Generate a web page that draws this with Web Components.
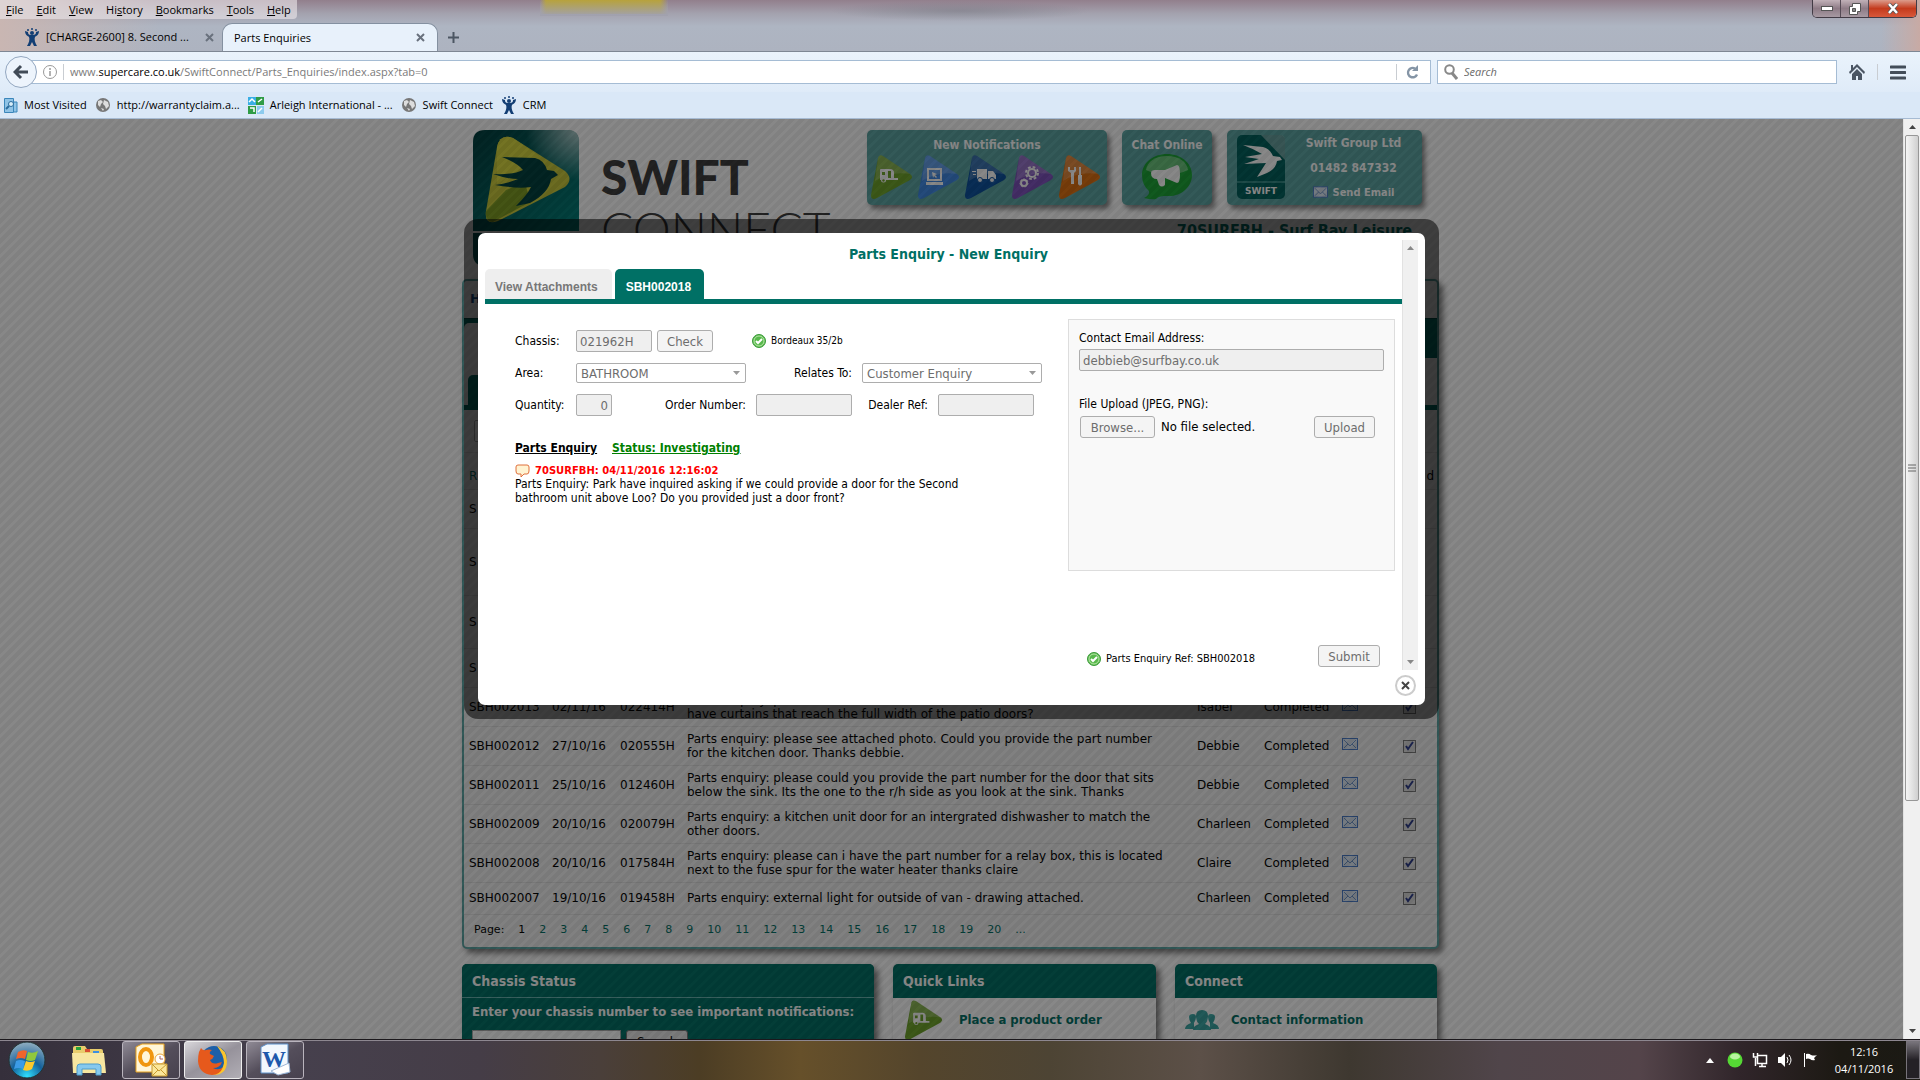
<!DOCTYPE html>
<html lang="en">
<head>
<meta charset="utf-8">
<title>Parts Enquiries</title>
<style>
	html, body { margin: 0; height: 100%; }
	body {
		display: flex;
		flex-direction: column;
		overflow: hidden;
		font-family: "DejaVu Sans Condensed", "DejaVu Sans", sans-serif;
		font-size: 12px;
		color: #000;
	}
</style>
</head>
<body>
<browser-chrome></browser-chrome>
<page-view></page-view>
<task-bar></task-bar>

<script>
class BaseElement extends HTMLElement {
	constructor() {
		super();
		this.attachShadow({ mode: "open" });
	}
	connectedCallback() {
		const template = document.createElement("template");
		template.innerHTML = `<style>*{box-sizing:border-box}${this.getStyles()}</style>${this.getTemplate()}`;
		this.shadowRoot.replaceChildren(template.content.cloneNode(true));
	}
}

const globe = `<svg width="16" height="16" viewBox="0 0 16 16"><circle cx="8" cy="8" r="7" fill="#777"/><path d="M3 4l3-1 2 2-2 2-1 3-2-2zM9 3l4 2 1 4-3 3-1-3-2-2zM6 11l3 1-1 2z" fill="#ddd"/></svg>`;
const jira = `<svg width="16" height="18" viewBox="0 0 16 18" fill="#123e74"><circle cx="8" cy="5" r="2"/><circle cx="4" cy="2" r="1"/><circle cx="12" cy="2" r="1"/><circle cx="8" cy="1" r="1"/><path d="M1 3c0 4 3 5 4 6 1 2 0 6-2 9h3l2-4 2 4h3c-2-3-3-7-2-9 1-1 4-2 4-6l-3 1c0 3-2 3-4 3S4 7 4 4z"/></svg>`;
const envelope = `<svg width="16" height="12" viewBox="0 0 16 12"><rect x=".5" y=".5" width="15" height="11" fill="#dbe5f2" stroke="#4a7cc8"/><path d="M2 2l6 6 6-6M2 10l4-4M14 10l-4-4" fill="none" stroke="#7095c8"/></svg>`;
const tick = `<svg width="14" height="14" viewBox="0 0 14 14"><circle cx="7" cy="7" r="6.5" fill="#58b94c" stroke="#3b9a3a"/><circle cx="7" cy="7" r="5" fill="none" stroke="#b9e6a9"/><path d="M4 7l2 2 4-4" fill="none" stroke="#fff" stroke-width="2"/></svg>`;

class BrowserChrome extends BaseElement {
	getStyles() {
		return `
			:host { display: block; flex: none; font-family: "Open Sans", "Noto Sans", sans-serif; font-size: 11px; line-height: 16px; }
			.strip {
				height: 52px; position: relative; border-bottom: 1px solid #7e8794;
				background:
					radial-gradient(ellipse 130px 10px at 960px 11px, #6b6f7866, transparent),
					linear-gradient(#0000, #a1a1ad) 540px 0 / 128px 16px no-repeat,
					linear-gradient(90deg, transparent 540px, #b7a23c 546px 660px, transparent 668px) 0 0 / 100% 14px no-repeat,
					linear-gradient(90deg, #c9b6b2 0, transparent 160px, transparent 98%, #c8aaa4),
					linear-gradient(#927f8c, #a4a3af 14px, #aeb5c2 26px, #adb3c0);
			}
			nav { display: inline-flex; gap: 13px; height: 19px; padding: 0 6px; line-height: 20px; background: #ece8eb99; border-radius: 0 0 4px 0; }
			nav a { color: #000; text-decoration: none; }
			nav u { text-decoration-thickness: 1px; }
			.tabs { display: flex; height: 28px; margin-top: 4px; align-items: center; }
			.tab { display: flex; align-items: center; gap: 6px; width: 222px; padding: 0 8px 0 24px; }
			.tab.on { width: 216px; height: 28px; padding: 0 12px 0 11px; background: #e8f1fb; border: 1px solid #8490a0; border-bottom: 0; border-radius: 10px 10px 0 0; }
			.tab span { flex: 1; white-space: nowrap; }
			.new { margin-left: 10px; }
			button { border: 0; padding: 0; background: none; display: flex; }
			.win { position: absolute; right: 3px; top: 0; display: flex; height: 18px; border: 1px solid #423b45; border-top: 0; border-radius: 0 0 5px 5px; overflow: hidden; }
			.win button { width: 28px; height: 17px; align-items: center; justify-content: center; background: linear-gradient(#c1b1b8, #8e7b86 50%, #a799a2); border-right: 1px solid #554a55; }
			.win button:last-child { width: 47px; border: 0; background: linear-gradient(#dc9c8c, #c43b1d 50%, #d8583a); }
			.bar { display: flex; align-items: center; height: 40px; padding: 0 14px 0 5px; background: linear-gradient(#eaf3fc, #dfebf8); }
			.back { width: 32px; height: 32px; flex: none; border-radius: 50%; border: 1px solid #93a7c0; background: #edf4fc; align-items: center; justify-content: center; z-index: 1; }
			.box { display: flex; align-items: center; gap: 6px; height: 24px; background: #fff; border: 1px solid #a5bcd4; }
			.url { flex: 1; margin-left: -6px; padding: 0 10px 0 11px; color: #7a7a7a; }
			.url p { flex: 1; margin: 0; }
			.url b { font-weight: 400; color: #000; }
			.sep { width: 1px; height: 16px; background: #c9cdd2; }
			.search { width: 400px; margin-left: 6px; padding: 0 6px; }
			input { flex: 1; border: 0; padding: 0; background: none; font: inherit; }
			input::placeholder { color: #6a6a6a; font-style: italic; opacity: 1; }
			.icons { display: flex; align-items: center; gap: 12px; margin-left: 12px; }
			.marks { display: flex; align-items: center; gap: 8px; height: 27px; padding: 0 4px; background: #dae8f7; border-bottom: 1px solid #a6bbd3; }
			.marks a { display: flex; align-items: center; gap: 6px; color: #000; text-decoration: none; }
		`;
	}
	getTemplate() {
		const cross = `<svg width="9" height="9" viewBox="0 0 9 9"><path d="M1 1l7 7M8 1l-7 7" stroke="#69717d" stroke-width="2"/></svg>`;
		return `
			<div class="strip">
				<nav><a href="#"><u>F</u>ile</a><a href="#"><u>E</u>dit</a><a href="#"><u>V</u>iew</a><a href="#">Hi<u>s</u>tory</a><a href="#"><u>B</u>ookmarks</a><a href="#"><u>T</u>ools</a><a href="#"><u>H</u>elp</a></nav>
				<div class="tabs">
					<div class="tab">${jira}<span>[CHARGE-2600] 8. Second ...</span><button aria-label="Close tab">${cross}</button></div>
					<div class="tab on"><span>Parts Enquiries</span><button aria-label="Close tab">${cross}</button></div>
					<button class="new" aria-label="New tab"><svg width="11" height="11"><path d="M5.500 0v11M0 5.500h11" stroke="#4c5663" stroke-width="2"/></svg></button>
				</div>
				<div class="win">
					<button aria-label="Minimise"><svg width="12" height="5"><rect x=".5" y=".5" width="11" height="4" fill="#fff" stroke="#555"/></svg></button>
					<button aria-label="Restore"><svg width="12" height="12"><path d="M3.500.5h8v8h-3v3h-8v-8h3z" fill="#fff" stroke="#555"/><path d="M3.500 5.500h3v3h-3z" fill="#888" stroke="#555"/></svg></button>
					<button aria-label="Close"><svg width="12" height="11"><path d="M2 1l8 9M10 1L2 10" stroke="#555" stroke-width="4"/><path d="M2 1l8 9M10 1L2 10" stroke="#fff" stroke-width="2.500"/></svg></button>
				</div>
			</div>
			<div class="bar">
				<button class="back" aria-label="Back"><svg width="16" height="16" viewBox="0 0 16 16"><path d="M8 2L2 8l6 6M3 8h12" fill="none" stroke="#414b57" stroke-width="3"/></svg></button>
				<div class="box url">
					<svg width="14" height="14" viewBox="0 0 14 14"><circle cx="7" cy="7" r="6.500" fill="none" stroke="#999"/><path d="M7 3v2M7 6v5" stroke="#999" stroke-width="1.500"/></svg>
					<i class="sep"></i>
					<p>www.<b>supercare.co.uk</b>/SwiftConnect/Parts_Enquiries/index.aspx?tab=0</p>
					<i class="sep"></i>
					<svg width="17" height="14" viewBox="-3 0 17 14"><path d="M11 9.500A4.700 4.700 0 1 1 9 3.500" fill="none" stroke="#8595a6" stroke-width="2.400"/><path d="M12 0v6H6z" fill="#8595a6"/></svg>
				</div>
				<div class="box search">
					<svg width="14" height="16" viewBox="0 0 14 16"><circle cx="5.500" cy="5.500" r="4.300" fill="none" stroke="#888" stroke-width="2"/><path d="M8 9l5 6" stroke="#888" stroke-width="3"/></svg>
					<input type="text" aria-label="Search" placeholder="Search">
				</div>
				<div class="icons">
					<svg width="16" height="16" viewBox="0 0 16 16"><path d="M8 0l8 8-1 2-7-7-7 7-1-2 2-2V1h2v3zM8 5l5 5v6h-4v-4H7v4H3v-6z" fill="#4a5563"/></svg>
					<i class="sep"></i>
					<svg width="16" height="15"><path d="M1 2h14M1 7.500h14M1 13h14" stroke="#434d59" stroke-width="3" stroke-linecap="round"/></svg>
				</div>
			</div>
			<div class="marks">
				<a href="#"><svg width="14" height="17" viewBox="0 0 14 17"><path d="M.5 1.500h9v14h-9zM10 5h3v10h-3" fill="#8fc3e6" stroke="#3b86ba"/><circle cx="7" cy="7" r="2.500" fill="#d8eefa" stroke="#2b6c9d"/><path d="M5 9l-3 3" stroke="#2b6c9d" stroke-width="2"/></svg>Most Visited</a>
				<a href="#">${globe}http://warrantyclaim.a...</a>
				<a href="#"><svg width="16" height="17" viewBox="0 0 16 17"><path d="M0 0h8v8H0z" fill="#39aee4"/><path d="M8 0h8v8H8zM0 9h8v8H0z" fill="#2f9c46"/><path d="M9 9h7v8H9z" fill="#8ccbee"/><path d="M1 5l3-3 3 3M10 5l4-3M2 11h4v4M10 15l4-4" stroke="#fff" fill="none" stroke-width="1.500"/></svg>Arleigh International - ...</a>
				<a href="#">${globe}Swift Connect</a>
				<a href="#">${jira}CRM</a>
			</div>
		`;
	}
}
customElements.define("browser-chrome", BrowserChrome);

// rounded play triangle with a white glyph in it
class PlayIcon extends BaseElement {
	getStyles() {
		return `:host { display: block; width: 42px; height: 44px; } svg { display: block; width: 100%; height: 100%; }`;
	}
	getTemplate() {
		const glyphs = {
			van: `<path d="M9 15q0-1 1-1h9q4 0 4 4v5h4v2H15a2.500 2.500 0 0 1-5 0H9z" fill="#fff"/><path d="M11 17h3v3h-3zM17 16h3v7h-3z" fill="#6fa52a"/><circle cx="12.500" cy="25.500" r="1.200" fill="#6fa52a"/>`,
			laptop: `<path d="M10 14h13v11H10z" fill="none" stroke="#fff" stroke-width="2"/><path d="M8 27h17v3H8zM14 17l5 2-2 1 2 2-1 1-2-2-1 2z" fill="#fff"/>`,
			truck: `<path d="M12 14h10v10H12zM23 16h5l3 4v4h-8zM7 16h4v1H7zM8 19h3v1H8z" fill="#fff"/><circle cx="15" cy="25" r="2.500" fill="#fff" stroke="#0b519f"/><circle cx="27" cy="25" r="2.500" fill="#fff" stroke="#0b519f"/>`,
			gears: `<circle cx="20" cy="18" r="4" fill="none" stroke="#fff" stroke-width="2"/><circle cx="20" cy="18" r="6" fill="none" stroke="#fff" stroke-width="2" stroke-dasharray="2.700 2"/><circle cx="12" cy="28" r="3" fill="none" stroke="#fff" stroke-width="2"/><circle cx="12" cy="28" r="4" fill="none" stroke="#fff" stroke-dasharray="2 1.500"/>`,
			tools: `<path d="M9 12v4l3 2v11h3V18l2-2v-4h-2v3h-4v-3zM20 12h2v8h1v9q-2 3-4 0v-9h1z" fill="#fff"/>`
		};
		const fill = this.getAttribute("fill");
		return `<svg viewBox="0 0 42 44">
			<path d="M7 3q1-4 5-2l27 18q4 3 0 6L6 43q-6 3-6-3z" fill="${fill}"/>
			<path d="M7 3q1-4 5-2l27 18Q20 16 4 26z" fill="#fff" opacity=".2"/>
			${glyphs[this.getAttribute("glyph")]}
		</svg>`;
	}
}
customElements.define("play-icon", PlayIcon);

class HeaderCard extends BaseElement {
	getStyles() {
		return `
			:host { display: block; height: 75px; background: #5ca6a4; border-radius: 5px; box-shadow: 3px 4px 5px #0007; color: #fff; font-weight: 700; }
			h3 { margin: 0; padding-top: 7px; font-size: 12px; line-height: 16px; text-align: center; }
			h3:empty { display: none; }
		`;
	}
	getTemplate() {
		return `<h3>${this.getAttribute("heading") || ""}</h3><slot></slot>`;
	}
}
customElements.define("header-card", HeaderCard);

class SiteHeader extends BaseElement {
	getStyles() {
		return `
			:host { display: block; height: 160px; }
			header { display: flex; align-items: flex-start; padding: 11px 19px 0 11px; }
			.logo { flex: none; }
			.brand { flex: 1; padding: 21px 0 0 22px; color: #3c3c3c; font: 900 48px/52px Lato, sans-serif; }
			.brand span { display: block; font-weight: 300; }
			.cards { display: grid; grid-template-columns: 240px 90px 195px; gap: 15px; }
			.row { display: flex; padding: 2px 4px; gap: 5px; }
			.chat { display: block; margin: 1px auto; }
			.contact { display: grid; grid-template-columns: 58px 1fr; }
			.contact svg { margin: 5px 0 0 10px; }
			.contact div { display: flex; flex-direction: column; gap: 9px; padding: 5px 0 0; text-align: center; font-size: 12px; line-height: 16px; }
			.contact a { color: #fff; font-size: 11px; text-decoration: none; }
			.contact a svg { margin: 0 5px 0 0; vertical-align: -2px; width: 15px; }
			h2 { grid-column: 1 / -1; margin: 0 10px 0 0; text-align: right; color: #007065; font-size: 16px; line-height: 22px; }
		`;
	}
	getTemplate() {
		return `
			<header>
				<svg class="logo" width="106" height="136" viewBox="0 0 106 136">
					<defs><linearGradient id="g" x2="1" y2="1"><stop offset="0" stop-color="#003c3c"/><stop offset="1" stop-color="#00807a"/></linearGradient>
					<radialGradient id="s" cx="1" cy="0" r=".5"><stop stop-color="#fff" stop-opacity=".7"/><stop offset="1" stop-color="#fff" stop-opacity="0"/></radialGradient></defs>
					<path d="M0 12Q0 0 12 0h82q12 0 12 12v89H0z" fill="url(#g)"/><path d="M0 12Q0 0 12 0h82q12 0 12 12v89H0z" fill="url(#s)"/>
					<path d="M0 103h106v21q0 12-12 12H12q-12 0-12-12z" fill="#005050"/>
					<path d="M24 17q3-14 16-9l52 33q9 8 0 16L25 91q-14 5-12-10z" fill="#c8c83a"/>
					<path d="M24 17q3-14 16-9l26 18-42 28z" fill="#d8d83e"/><path d="M33 60l19-8 5 20-37 20q-8 0-7-11z" fill="#7e9c22"/>
					<path d="M29 27l33 1q9 2 12 12l7 1 4 4-7 4q-2 14-21 24l-14 3q12-12 15-19-14 2-36-2 14-2 23-6-11 0-25-5 20 1 30-4-6-7-21-13z" fill="#00403e"/>
				</svg>
				<div class="brand">SWIFT<span>CONNECT</span></div>
				<div class="cards">
					<header-card heading="New Notifications"><div class="row">
						<play-icon glyph="van" fill="#6fa52a"></play-icon><play-icon glyph="laptop" fill="#3f8ae6"></play-icon><play-icon glyph="truck" fill="#0b519f"></play-icon><play-icon glyph="gears" fill="#7d52bd"></play-icon><play-icon glyph="tools" fill="#df7010"></play-icon>
					</div></header-card>
					<header-card heading="Chat Online"><svg class="chat" width="50" height="46" viewBox="0 0 50 46"><path d="M25 0c14 0 25 9 25 21S39 43 25 42c-5 0-8 0-11 3q-4 1-12-1 6-3 5-7-7-6-7-16C0 9 11 0 25 0z" fill="#1ba636"/><path d="M25 2c12 0 20 6 21 14q-21 10-42 0C5 8 13 2 25 2z" fill="#fff" opacity=".35"/><path d="M9 19q0-3 4-3h10l12-5q3 0 3 9t-3 9l-12-5v7q-3 3-6 0l-2-6q-6 0-6-6z" fill="#fff"/></svg></header-card>
					<header-card><div class="contact">
						<svg width="48" height="64" viewBox="0 0 48 64"><rect width="48" height="64" rx="5" fill="#00605c"/><path d="M0 47h48" stroke="#69b3b0"/><path d="M24 0h19q5 0 5 5v20z" fill="#fff" opacity=".4"/><path d="M6 10l20 2q7 2 10 9l7 1 2 3-5 1q-1 8-10 12L20 42l9-14-22 1 15-5-14-2 17-3Q17 14 6 10z" fill="#fff"/><text x="24" y="59" text-anchor="middle" fill="#fff" font-family="DejaVu Sans" font-weight="700" font-size="9">SWIFT</text></svg>
						<div><span>Swift Group Ltd</span><span>01482 847332</span><a href="#">${envelope}Send Email</a></div>
					</div></header-card>
					<h2>70SURFBH - Surf Bay Leisure</h2>
				</div>
			</header>
		`;
	}
}
customElements.define("site-header", SiteHeader);

class EnquiryList extends BaseElement {
	getStyles() {
		return `
			:host { display: block; background: #f2f2f2; border: 2px solid #5ca6a4; border-radius: 5px; box-shadow: 4px 4px 6px #0008; font: 12px/14px "DejaVu Sans", sans-serif; }
			.nav { height: 37px; padding: 11px 6px; color: #124a86; font-weight: 700; font-size: 13px; }
			.sub { height: 40px; background: #007065; border-top: 1px solid #005048; }
			.sub i { display: block; width: 300px; height: 35px; margin-top: 4px; background: #f2f2f2; border-radius: 5px 5px 0 0; }
			.tabs { height: 52px; padding-top: 17px; border-bottom: 5px solid #007065; }
			.tabs i { display: block; width: 100px; height: 30px; margin-left: 4px; background: #007065; border-radius: 5px 5px 0 0; }
			.filter { height: 42px; padding: 10px; }
			.filter input { width: 120px; height: 22px; border: 1px solid #aaa; border-radius: 2px; }
			table { width: 100%; border-collapse: collapse; table-layout: fixed; }
			td, th { padding: 0 0 0 5px; height: 39px; border-top: 1px solid #e0e0e0; text-align: left; font-weight: 400; white-space: nowrap; }
			th { height: 37px; padding-top: 10px; color: #007065; }
			th:last-child { text-align: right; padding-right: 3px; color: #000; }
			td.gap { height: 67px; }
			td.mid { height: 53px; }
			td.low { height: 31px; }
			td svg { display: block; margin-top: -4px; }
			td input { display: block; appearance: none; width: 13px; height: 13px; margin: 0; border: 1px solid #777; background: #ddd; }
			td svg.check { margin: -12px 0 2px 2px; }
			.pager { display: flex; gap: 14px; height: 33px; padding: 8px 10px; border-top: 1px solid #e0e0e0; font-size: 11px; }
			.pager a { color: #007065; text-decoration: none; }
		`;
	}
	getTemplate() {
		const rows = [
			["SBH002013", "02/11/16", "022414H", "Parts enquiry: please<br>have curtains that reach the full width of the patio doors?", "Isabel"],
			["SBH002012", "27/10/16", "020555H", "Parts enquiry: please see attached photo. Could you provide the part number<br>for the kitchen door. Thanks debbie.", "Debbie"],
			["SBH002011", "25/10/16", "012460H", "Parts enquiry: please could you provide the part number for the door that sits<br>below the sink. Its the one to the r/h side as you look at the sink. Thanks", "Debbie"],
			["SBH002009", "20/10/16", "020079H", "Parts enquiry: a kitchen unit door for an intergrated dishwasher to match the<br>other doors.", "Charleen"],
			["SBH002008", "20/10/16", "017584H", "Parts enquiry: please can i have the part number for a relay box, this is located<br>next to the fuse spur for the water heater thanks claire", "Claire"],
			["SBH002007", "19/10/16", "019458H", "Parts enquiry: external light for outside of van - drawing attached.", "Charleen"]
		];
		const body = rows.map((row, i) => {
			const cls = i === rows.length - 1 ? "low" : "";
			return `<tr>${row.map(cell => `<td class="${cls}">${cell}</td>`).join("")}
				<td class="${cls}">Completed</td><td class="${cls}">${envelope}</td>
				<td class="${cls}"><input type="checkbox" checked aria-label="${row[0]} closed"><svg class="check" width="9" height="10"><path d="M1 5l2 3 5-7" fill="none" stroke="#2c3b8a" stroke-width="2"/></svg></td></tr>`;
		}).join("");
		const pages = Array.from({ length: 19 }, (_, i) => `<a href="#">${i + 2}</a>`).join("");
		return `
			<div class="nav">H</div>
			<div class="sub"><i></i></div>
			<div class="tabs"><i></i></div>
			<div class="filter"><input type="text" aria-label="Filter"></div>
			<table>
				<colgroup><col style="width:83px"><col style="width:68px"><col style="width:67px"><col style="width:510px"><col style="width:67px"><col style="width:78px"><col style="width:61px"><col></colgroup>
				<tr><th colspan="7">R</th><th>d</th></tr>
				<tr><td colspan="8">S</td></tr>
				<tr><td colspan="8" class="gap">S</td></tr>
				<tr><td colspan="8" class="mid">S</td></tr>
				<tr><td colspan="8">S</td></tr>
				${body}
			</table>
			<div class="pager"><span>Page:</span><span>1</span>${pages}<a href="#">...</a></div>
		`;
	}
}
customElements.define("enquiry-list", EnquiryList);

class InfoCard extends BaseElement {
	getStyles() {
		return `
			:host { display: block; height: 200px; background: #fff; border-radius: 5px 5px 0 0; box-shadow: 4px 4px 6px #0008; color: #007065; font-weight: 700; font-size: 13px; }
			:host([solid]) { background: #007065; color: #fff; }
			h3 { margin: 0; height: 34px; padding: 0 10px; font-size: 14px; line-height: 35px; color: #fff; background: #007065; border-radius: 5px 5px 0 0; border-bottom: 1px solid #007065; }
			:host([solid]) h3 { border-bottom-color: #69b3b0; }
			div { padding: 0 10px; }
		`;
	}
	getTemplate() {
		return `<h3>${this.getAttribute("heading")}</h3><div><slot></slot></div>`;
	}
}
customElements.define("info-card", InfoCard);

class ScrollBar extends BaseElement {
	getStyles() {
		return `
			:host { display: flex; flex-direction: column; width: 17px; background: #f0f0f0; border-left: 1px solid #e2e2e2; }
			svg { flex: none; display: block; margin: 6px auto; }
			.track { flex: 1; display: flex; flex-direction: column; }
			.thumb { height: 75%; margin: 0 1px; display: flex; align-items: center; justify-content: center; border: 1px solid #979797; border-radius: 2px; background: linear-gradient(90deg, #f5f5f5, #e3e3e3 50%, #cfcfcf); }
			:host([disabled]) .thumb { display: none; }
			:host([disabled]) svg { opacity: .6; }
		`;
	}
	getTemplate() {
		return `<svg width="7" height="4"><path d="M0 4l3.500-4L7 4z" fill="#444"/></svg>
			<div class="track"><div class="thumb"><svg width="8" height="8"><path d="M0 1h8M0 4h8M0 7h8" stroke="#666"/></svg></div></div>
			<svg width="7" height="4"><path d="M0 0l3.500 4L7 0z" fill="#444"/></svg>`;
	}
}
customElements.define("scroll-bar", ScrollBar);

class EnquiryDialog extends BaseElement {
	getStyles() {
		return `
			:host { display: block; width: 975px; padding: 14px; background: #0008; border-radius: 14px; }
			.panel { height: 472px; padding: 7px 7px 0; background: #fff; border-radius: 7px; }
			.frame { display: flex; height: 430px; }
			main { flex: 1; }
			scroll-bar { width: 16px; }
			h1 { margin: 0; padding-left: 10px; color: #007065; font-size: 14px; line-height: 29px; text-align: center; }
			.tabs { display: flex; gap: 3px; border-bottom: 5px solid #007065; font: 700 12px/26px "Liberation Sans", Arial, sans-serif; }
			.tabs button { height: 30px; padding: 5px 14px 0 10px; border: 0; border-radius: 5px 5px 0 0; font: inherit; color: #777; background: #eee; }
			.tabs button.on { padding: 5px 13px 0 11px; color: #fff; background: #007065; }
			.body { display: flex; justify-content: space-between; padding: 15px 7px 0 30px; }
			form { display: flex; flex-direction: column; gap: 10px; padding-top: 11px; }
			.row { display: flex; align-items: center; height: 22px; }
			label { flex: none; }
			.l { width: 61px; }
			.r { padding-right: 10px; text-align: right; }
			input, select, .b { height: 22px; padding: 0 3px; border: 1px solid #adadad; border-radius: 2px; background: #efefef; color: #6d6d6d; font: 13px "DejaVu Sans Condensed", "DejaVu Sans", sans-serif; opacity: 1; }
			select { height: 20px; padding: 0 4px; appearance: none; background: #fff url("data:image/svg+xml,%3Csvg xmlns='http://www.w3.org/2000/svg' width='7' height='4'%3E%3Cpath d='M0 0h7L3.500 4z' fill='%23999'/%3E%3C/svg%3E") no-repeat right 5px center; }
			.b { padding: 0; background: #f4f4f4; border-radius: 3px; }
			.note { display: flex; align-items: center; gap: 5px; font-size: 10px; line-height: 16px; }
			h2 { display: flex; gap: 15px; margin: 12px 0 0; font-size: 12px; line-height: 20px; text-decoration: underline; }
			h2 span { color: #008000; text-decoration: underline; }
			.log { margin: -4px 0 0; line-height: 14px; }
			.log strong { display: flex; align-items: center; gap: 5px; height: 13px; color: #f00; font: 700 10px/13px "DejaVu Sans", sans-serif; }
			aside { width: 327px; }
			.side { height: 252px; padding: 10px; border: 1px solid #ddd; background: #f9f9f9; line-height: 16px; }
			.side label { display: block; }
			.mail { display: block; width: 305px; margin: 3px 0 25px; }
			.side .row { margin-top: 4px; padding: 0 9px 0 1px; gap: 6px; font-size: 13px; }
			.side .row span { flex: 1; }
			.foot { display: flex; justify-content: space-between; align-items: flex-end; margin-top: 74px; padding: 0 15px 0 19px; }
			.foot .note { font-size: 11px; }
			.close { display: flex; align-items: center; justify-content: center; width: 21px; height: 21px; margin: 5px 2px 0 auto; padding: 0; border: 2px solid #ccc; border-radius: 50%; background: #fff; }
		`;
	}
	getTemplate() {
		return `
			<div class="panel">
				<div class="frame">
					<main>
						<h1>Parts Enquiry - New Enquiry</h1>
						<div class="tabs"><button>View Attachments</button><button class="on">SBH002018</button></div>
						<div class="body">
							<form>
								<div class="row">
									<label class="l" for="chassis">Chassis:</label><input id="chassis" style="width:76px" value="021962H" disabled>
									<button class="b" style="width:56px;margin-left:5px" disabled>Check</button>
									<span class="note" style="margin-left:39px">${tick}Bordeaux 35/2b</span>
								</div>
								<div class="row">
									<label class="l" for="area">Area:</label><select id="area" style="width:170px" disabled><option>BATHROOM</option></select>
									<label class="r" style="width:116px" for="relates">Relates To:</label><select id="relates" style="width:180px" disabled><option>Customer Enquiry</option></select>
								</div>
								<div class="row">
									<label class="l" for="qty">Quantity:</label><input id="qty" style="width:36px;text-align:right" value="0" disabled>
									<label class="r" style="width:144px" for="order">Order Number:</label><input id="order" style="width:96px" disabled>
									<label class="r" style="width:86px" for="dealer">Dealer Ref:</label><input id="dealer" style="width:96px" disabled>
								</div>
								<h2>Parts Enquiry<span>Status: Investigating</span></h2>
								<p class="log"><strong><svg width="15" height="14" viewBox="0 0 15 14"><path d="M3 1h9q2 0 2 2v4q0 3-2 3H9l-3 3v-3H3Q1 10 1 7V3q0-2 2-2z" fill="#fff3d2" stroke="#e0703c"/></svg>70SURFBH: 04/11/2016 12:16:02</strong>
								Parts Enquiry: Park have inquired asking if we could provide a door for the Second<br>bathroom unit above Loo? Do you provided just a door front?</p>
							</form>
							<aside>
								<div class="side">
									<label for="mail">Contact Email Address:</label>
									<input class="mail" id="mail" value="debbieb@surfbay.co.uk" disabled>
									<label for="browse">File Upload (JPEG, PNG):</label>
									<div class="row"><button id="browse" class="b" style="width:75px" disabled>Browse...</button><span>No file selected.</span><button class="b" style="width:61px" disabled>Upload</button></div>
								</div>
								<div class="foot"><span class="note">${tick}Parts Enquiry Ref: SBH002018</span><button class="b" style="width:62px" disabled>Submit</button></div>
							</aside>
						</div>
					</main>
					<scroll-bar disabled></scroll-bar>
				</div>
				<button class="close" aria-label="Close"><svg width="9" height="9"><path d="M1 1l7 7M8 1L1 8" stroke="#444" stroke-width="2"/></svg></button>
			</div>
		`;
	}
}
customElements.define("enquiry-dialog", EnquiryDialog);

class PageView extends BaseElement {
	getStyles() {
		return `
			:host { display: flex; flex: 1; min-height: 0; }
			.view { flex: 1; position: relative; overflow: hidden; background: #fff; }
			.page { width: 979px; margin: 0 auto; }
			enquiry-list { margin-right: 2px; }
			.cards { display: grid; grid-template-columns: 412px 263px 262px; gap: 19px; margin-top: 15px; }
			.link { display: flex; align-items: center; height: 44px; gap: 12px; color: #007065; text-decoration: none; }
			.link play-icon { width: 38px; height: 40px; margin: 0 4px 0 2px; }
			.cards p { margin: 0; line-height: 28px; }
			.find { display: flex; gap: 5px; margin-top: 4px; }
			.find input { width: 149px; height: 24px; border: 1px solid #aaa; }
			.find button { width: 62px; height: 24px; padding: 0; border: 1px solid #777; border-radius: 3px; font: 13px/16px "DejaVu Sans Condensed", sans-serif; background: #e8e8e8; }
			.shade {
				position: absolute; inset: 0; display: flex; justify-content: center; align-items: flex-start; padding-top: 100px;
				background: linear-gradient(135deg, #0202027f 30%, #0707077b 30% 50%, #0202027f 50% 80%, #0707077b 80%) 0 0 / 10px 10px;
			}
		`;
	}
	getTemplate() {
		return `
			<div class="view">
				<div class="page">
					<site-header></site-header>
					<enquiry-list></enquiry-list>
					<div class="cards">
						<info-card heading="Chassis Status" solid>
							<p><label for="find">Enter your chassis number to see important notifications:</label></p>
							<div class="find"><input id="find"><button>Search</button></div>
						</info-card>
						<info-card heading="Quick Links"><a class="link" href="#"><play-icon glyph="van" fill="#6fa52a"></play-icon>Place a product order</a></info-card>
						<info-card heading="Connect"><a class="link" href="#"><svg width="34" height="20" viewBox="0 0 34 20" fill="#3aa6a4"><path d="M0 19q0-4 6-6Q4 10 4 7q0-3 4-3 3 0 3 3 0 3-2 6v6zM34 19q0-4-6-6 2-3 2-6 0-3-4-3-3 0-3 3 0 3 2 6v6z"/><path d="M8 20q0-4 6-6-3-3-3-8 0-6 6-6t6 6q0 5-3 8 6 2 6 6z"/></svg>Contact information</a></info-card>
					</div>
				</div>
				<div class="shade"><enquiry-dialog></enquiry-dialog></div>
			</div>
			<scroll-bar></scroll-bar>
		`;
	}
}
customElements.define("page-view", PageView);

class TaskBar extends BaseElement {
	getStyles() {
		return `
			:host {
				display: flex; flex: none; align-items: center; height: 40px; border-top: 1px solid #1b181c; box-shadow: inset 0 1px #8d8790;
				font: 11px/17px "Open Sans", "Noto Sans", sans-serif; color: #fff;
				background: linear-gradient(90deg, #352f3b, #46404d 300px, #453d47 480px, #4a3f3a 600px, #4c3d24 700px, #66502a 800px, #54452c 920px, #4d4434 1050px, #5c5048 1200px, #3e3830 1350px, #50454a 1500px, #54444a 1640px, #30252a 1740px, #1c1913 1840px, #1b1a14);
			}
			.orb { margin: 0 26px 0 8px; }
			.folder { margin-right: 16px; }
			button { display: flex; align-items: center; justify-content: center; width: 58px; height: 38px; margin-right: 4px; padding: 0; border: 1px solid #b9b4bd; border-radius: 3px; background: linear-gradient(150deg, #8f8a95, #544e5b 50%, #47414e); }
			button.on { background: linear-gradient(150deg, #d8d6da, #96929b 50%, #b1aeb5); border-color: #eee; }
			.tray { margin-left: auto; display: flex; align-items: center; gap: 9px; }
			time { width: 70px; padding-left: 4px; text-align: center; }
			.desk { width: 14px; height: 38px; border: 1px solid #77737a; background: linear-gradient(#77737a, #242126 50%); }
		`;
	}
	getTemplate() {
		return `
			<svg class="orb" width="38" height="38" viewBox="0 0 38 38"><defs><radialGradient id="o" cx=".5" cy=".95" r=".9"><stop stop-color="#2fe0ff"/><stop offset=".5" stop-color="#14619b"/><stop offset="1" stop-color="#86a7bd"/></radialGradient></defs><circle cx="19" cy="19" r="18" fill="url(#o)" stroke="#233"/><path d="M10 11q5-3 9-1l-2 8q-4-2-9 0z" fill="#f0642b"/><path d="M20 11q5 2 10-1l-3 9q-4 2-9 0z" fill="#90c83c"/><path d="M8 20q4-2 9 0l-2 8q-4-2-9 0z" fill="#3c9be6"/><path d="M18 20q4 2 9 0l-3 8q-4 3-9 1z" fill="#fcc92c"/></svg>
			<svg class="folder" width="34" height="32" viewBox="0 0 34 32"><path d="M1 4q0-2 2-2h10l2 3h14q2 0 2 2v20H1z" fill="#e8cc6c"/><path d="M4 3h5v3H4z" fill="#27a33a"/><path d="M13 5h5v3h-5z" fill="#d94f31"/><path d="M21 7h6v3h-6z" fill="#3d8fe0"/><path d="M0 9h32l2 20H1z" fill="#f7e6a0"/><path d="M5 31v-8q0-3 3-3h18q3 0 3 3v8h-5v-6H10v6z" fill="#86c9ee" stroke="#4d9ccc"/></svg>
			<button aria-label="Outlook"><svg width="34" height="34" viewBox="0 0 34 34"><path d="M2 4l6-3h22v28H2z" fill="#fff6d8" stroke="#e9a21c"/><ellipse cx="12" cy="14" rx="6" ry="8" fill="none" stroke="#f0960f" stroke-width="4"/><circle cx="26" cy="16" r="5" fill="#fff" stroke="#e8a53a"/><path d="M26 13v3h3" fill="none" stroke="#a66"/><path d="M18 21h15v12H18z" fill="#fbe79a" stroke="#c89a2e"/><path d="M18 21l7 7 8-7M18 33l6-6M33 33l-6-6" fill="none" stroke="#c89a2e"/></svg></button>
			<button class="on" aria-label="Firefox"><svg width="32" height="32" viewBox="0 0 32 32"><circle cx="17" cy="15" r="13" fill="#1d5fa8"/><path d="M20 2q10 4 10 15 0 14-14 14 10-4 11-12 0-8-7-17z" fill="#fbc52d"/><path d="M2 8q1-2 2-4 2 3 5 2 3-1 6 0-3 2-2 4l4 2q-1 3-4 4 2 5 8 3l4-1q-2 6-9 6 6 3 10-1-3 8-11 8Q2 30 1 17q0-5 1-9z" fill="#e6591c"/></svg></button>
			<button aria-label="Word"><svg width="32" height="34" viewBox="0 0 32 34"><path d="M2 4l6-3h21v29H2z" fill="#f2f7fd" stroke="#5b8fc9"/><text x="3" y="24" fill="#1d58ab" font-family="Liberation Serif" font-weight="700" font-size="24">W</text><path d="M12 28l18-8 1 9-12 3z" fill="#fff" stroke="#9db6d6"/></svg></button>
			<div class="tray">
				<svg width="16" height="5"><path d="M4 5l4-5 4 5z" fill="#fff"/></svg>
				<svg width="16" height="16"><circle cx="8" cy="8" r="7.500" fill="#55d834"/><ellipse cx="8" cy="4.500" rx="5" ry="3" fill="#b8f5a0"/></svg>
				<svg width="16" height="16"><path d="M5.500 3.500h9v8h-9zM7 14.500h7M10 12v2M3.500 6v8M1.500 1v4h4V1" fill="none" stroke="#fff" stroke-width="1.500"/></svg>
				<svg width="16" height="16"><path d="M1 5h3l4-4v14l-4-4H1z" fill="#fff"/><path d="M10 5q2 3 0 6M12 3q4 5 0 10" fill="none" stroke="#fff"/></svg>
				<svg width="16" height="16"><path d="M2.500 1v14" stroke="#fff"/><path d="M4 2q3-1 5 1 3 1 6 0l-3 3 1 2q-3 1-5-1-2-1-4 0z" fill="#fff"/></svg>
				<time>12:16<br>04/11/2016</time>
				<div class="desk"></div>
			</div>
		`;
	}
}
customElements.define("task-bar", TaskBar);
</script>
</body>
</html>
